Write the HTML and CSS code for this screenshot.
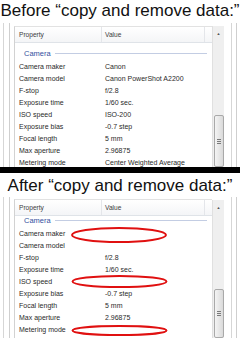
FILE: index.html
```html
<!DOCTYPE html>
<html lang="en">
<head>
  <meta charset="UTF-8">
  <title>Copy and remove data</title>
  <link rel="stylesheet" href="styles.css">
</head>
<body>
  <h1 class="caption">Before “copy and remove data:”</h1>
  <div class="dialog before">
    <div class="rail"></div>
    <div class="list">
      <div class="head">
        <span class="col-prop">Property</span>
        <span class="col-val">Value</span>
        <span class="col-end"></span>
      </div>
      <div class="body">
        <div class="rows">
          <div class="group"><span>Camera</span><i></i></div>
          <div class="row"><span class="col-prop">Camera maker</span><span class="col-val">Canon</span></div>
          <div class="row"><span class="col-prop">Camera model</span><span class="col-val">Canon PowerShot A2200</span></div>
          <div class="row"><span class="col-prop">F-stop</span><span class="col-val">f/2.8</span></div>
          <div class="row"><span class="col-prop">Exposure time</span><span class="col-val">1/60 sec.</span></div>
          <div class="row"><span class="col-prop">ISO speed</span><span class="col-val">ISO-200</span></div>
          <div class="row"><span class="col-prop">Exposure bias</span><span class="col-val">-0.7 step</span></div>
          <div class="row"><span class="col-prop">Focal length</span><span class="col-val">5 mm</span></div>
          <div class="row"><span class="col-prop">Max aperture</span><span class="col-val">2.96875</span></div>
          <div class="row"><span class="col-prop">Metering mode</span><span class="col-val">Center Weighted Average</span></div>
        </div>
      </div>
    </div>
    <div class="scroll">
      <div class="arrow">&#9650;</div>
      <div class="thumb"><span class="grip"></span></div>
    </div>
    <div class="rail right"></div>
  </div>

  <div class="divider"></div>

  <h1 class="caption after-cap">After “copy and remove data:”</h1>
  <div class="dialog after">
    <div class="rail"></div>
    <div class="list">
      <div class="head">
        <span class="col-prop">Property</span>
        <span class="col-val">Value</span>
        <span class="col-end"></span>
      </div>
      <div class="body">
        <div class="rows">
          <div class="group"><span>Camera</span><i></i></div>
          <div class="row"><span class="col-prop">Camera maker</span><span class="col-val"></span></div>
          <div class="row"><span class="col-prop">Camera model</span><span class="col-val"></span></div>
          <div class="row"><span class="col-prop">F-stop</span><span class="col-val">f/2.8</span></div>
          <div class="row"><span class="col-prop">Exposure time</span><span class="col-val">1/60 sec.</span></div>
          <div class="row"><span class="col-prop">ISO speed</span><span class="col-val"></span></div>
          <div class="row"><span class="col-prop">Exposure bias</span><span class="col-val">-0.7 step</span></div>
          <div class="row"><span class="col-prop">Focal length</span><span class="col-val">5 mm</span></div>
          <div class="row"><span class="col-prop">Max aperture</span><span class="col-val">2.96875</span></div>
          <div class="row"><span class="col-prop">Metering mode</span><span class="col-val"></span></div>
        </div>
      </div>
    </div>
    <div class="scroll">
      <div class="arrow">&#9650;</div>
      <div class="thumb"><span class="grip"></span></div>
    </div>
    <div class="rail right"></div>

    <!-- red marks over the removed values -->
    <svg class="marks" width="240" height="141" viewBox="0 0 240 141">
      <ellipse cx="119" cy="38" rx="47" ry="7" />
      <ellipse cx="119.5" cy="84.5" rx="47" ry="5.5" />
      <ellipse cx="119.5" cy="133.5" rx="47" ry="4.5" />
    </svg>
  </div>
</body>
</html>
```

FILE: styles.css
```css
body {
  margin: 0;
  width: 240px;
  background: #fff;
  font-family: "Liberation Sans", Arial, sans-serif;
  color: #2a2a2a;
  overflow: hidden;
}
.caption {
  margin: 0;
  height: 23px;
  line-height: 22px;
  font-size: 17px;
  font-weight: normal;
  color: #111;
  text-align: center;
  white-space: nowrap;
}
.after-cap {
  margin-top: 2px;
  height: 22px;
}
.divider {
  height: 6px;
  background: #000;
}
.dialog {
  position: relative;
  display: flex;
  height: 144px;
  overflow: hidden;
}
.dialog.after {
  height: 141px;
}
.rail {
  width: 5px;
  margin-left: 3px;
  margin-right: 4px;
  border-left: 1px solid #d6d6d6;
  border-right: 1px solid #cfcfcf;
}
.rail.right {
  width: 4px;
  margin-left: 7px;
  margin-right: 3px;
}
.list {
  width: 198px;
  margin-top: 3px;
  border-left: 1px solid #d2d2d2;
  border-top: 1px solid #e2e2e2;
  display: flex;
  flex-direction: column;
  overflow: hidden;
}
.after .list {
  margin-top: 2px;
}
.head {
  display: flex;
  height: 15px;
  line-height: 15px;
  font-size: 6.6px;
  color: #3d3d3d;
  background: linear-gradient(#fff, #f4f5f7);
  border-bottom: 1px solid #dfe3e8;
  flex-shrink: 0;
}
.head .col-prop {
  border-right: 1px solid #e4e6ea;
}
.head .col-val {
  width: 99px;
  border-right: 1px solid #e4e6ea;
}
.col-prop {
  width: 82px;
  padding-left: 4px;
  white-space: nowrap;
}
.col-val {
  padding-left: 3px;
  white-space: nowrap;
}
.col-end {
  flex: 1;
}
.body {
  flex: 1;
  overflow: hidden;
}
.rows {
  padding-top: 4px;
}
.after .rows {
  margin-top: -2px;
  padding-top: 0;
}
.group {
  display: flex;
  align-items: center;
  height: 12px;
  margin-bottom: 2px;
  padding-left: 9px;
  font-size: 7.5px;
  color: #3450a0;
}
.group i {
  display: block;
  width: 152px;
  height: 1px;
  margin-left: 4px;
  background: #c3cde3;
}
.row {
  display: flex;
  height: 12px;
  line-height: 12px;
  font-size: 7px;
}
.row .col-prop {
  width: 83px;
}
.scroll {
  width: 11px;
  background: #efefef;
  border-left: 1px solid #e0e0e0;
  display: flex;
  flex-direction: column;
  align-items: center;
  margin-top: 3px;
}
.arrow {
  height: 15px;
  line-height: 15px;
  font-size: 4px;
  color: #555;
}
.thumb {
  width: 8px;
  height: 58px;
  margin-top: 74px;
  border: 1px solid #a9a9a9;
  border-radius: 2px;
  background: linear-gradient(to right, #f4f4f4, #dadada);
  display: flex;
  align-items: center;
  justify-content: center;
}
.grip {
  display: block;
  width: 4px;
  height: 5px;
  background: repeating-linear-gradient(#7a7a7a 0 1px, transparent 1px 2px);
}
.marks {
  position: absolute;
  left: 0;
  top: 0;
}
.marks ellipse {
  fill: none;
  stroke: #e01010;
  stroke-width: 2;
}
```
